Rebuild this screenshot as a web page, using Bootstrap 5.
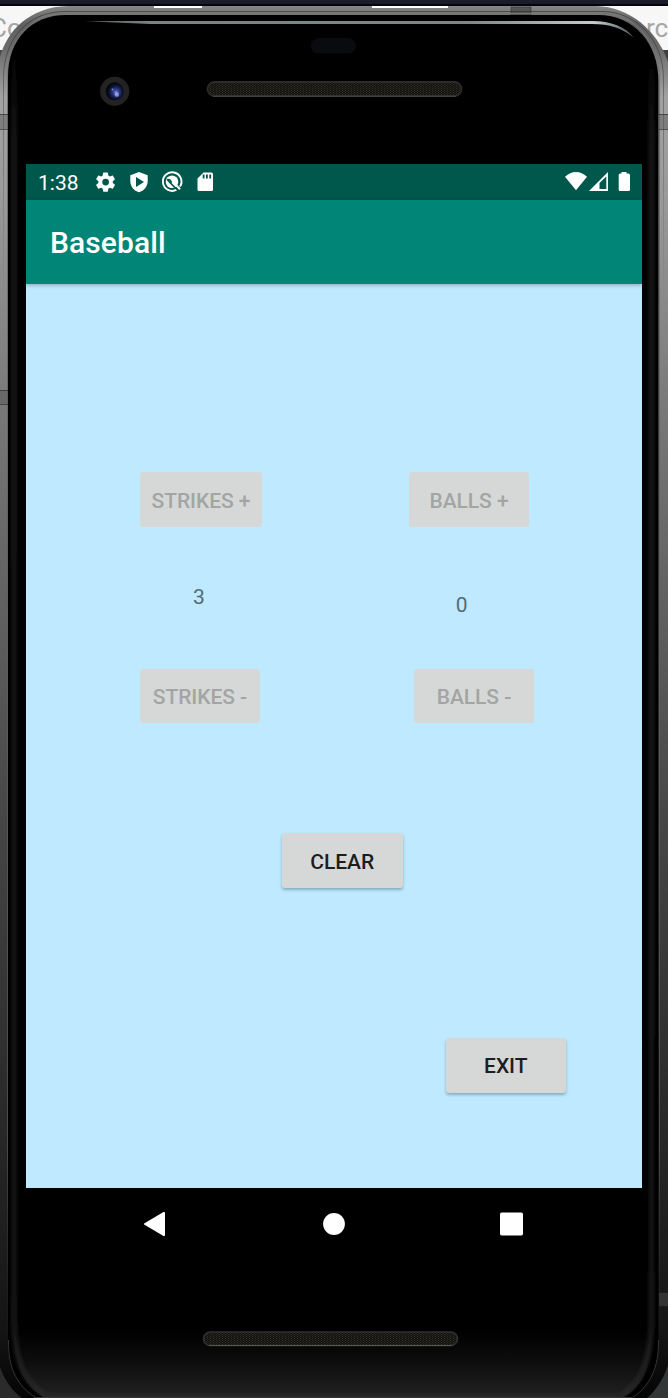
<!DOCTYPE html>
<html lang="en">
<head>
<meta charset="utf-8">
<meta name="viewport" content="width=device-width, initial-scale=1">
<title>Baseball</title>
<link href="https://cdn.jsdelivr.net/npm/bootstrap@5.3.0/dist/css/bootstrap.min.css" rel="stylesheet">
<style>
  body { font-family: Roboto, sans-serif; background: #f7f7f7; overflow: hidden; }
  .device { width: 668px; height: 1398px; }
  .shell { inset: 0; }
  .shell text { font-family: Roboto, sans-serif; }
  .forehead { height: 164px; }
  .display { width: 616px; margin-left: 26px; }
  .statusbar { height: 36px; background: #00574b; color: #fff; font-size: 21px; padding: 0 10px 0 12px; }
  .statusbar .clock { width: 40px; line-height: 36px; padding-top: 1px; }
  .appbar { height: 84px; background: #008577; box-shadow: 0 1px 4px rgba(0,0,0,.3); padding: 2px 0 0 24px; z-index: 1; }
  .appbar h1 { font-size: 30px; font-weight: 500; line-height: 36px; letter-spacing: .1px; }
  .board { height: 904px; background: #bfe9ff; padding-top: 188px; }
  .key { --bs-btn-font-size: 21px; --bs-btn-font-weight: 500; --bs-btn-line-height: 24px;
    --bs-btn-padding-x: 0; --bs-btn-padding-y: 0; --bs-btn-border-width: 0; --bs-btn-border-radius: 3px;
    --bs-btn-color: #1c1e1e; --bs-btn-bg: #d6d8d7;
    --bs-btn-disabled-color: #a3a5a4; --bs-btn-disabled-bg: #d6d8d7; --bs-btn-disabled-opacity: 1;
    width: 120px; height: 55px; padding-top: 2px; letter-spacing: -.05px; }
  .key-wide { width: 122px; }
  .key-short { height: 54px; padding-top: 1px; }
  .key-raised { width: 120.5px; padding-top: 1px; box-shadow: 0 2px 3px rgba(0,40,60,.3); }
  .key-clear { padding-top: 3px; }
  .pair { padding-left: 114px; }
  .count { font-size: 21px; line-height: 24px; color: #546b77; }
  .counts { height: 142px; padding-left: 167px; }
</style>
</head>
<body>
<div class="device position-relative overflow-hidden">
  <!-- phone body -->
  <svg class="shell position-absolute" width="668" height="1398" viewBox="0 0 668 1398" aria-hidden="true">
    <defs>
      <linearGradient id="rim" x1="0" y1="0" x2="0" y2="1398" gradientUnits="userSpaceOnUse">
        <stop offset="0" stop-color="#929292"/><stop offset=".018" stop-color="#606060"/><stop offset=".035" stop-color="#6c6c6c"/><stop offset=".07" stop-color="#a2a2a2"/><stop offset=".14" stop-color="#9a9a9a"/><stop offset=".3" stop-color="#777"/>
        <stop offset=".6" stop-color="#444"/><stop offset=".85" stop-color="#222"/><stop offset=".95" stop-color="#151515"/><stop offset="1" stop-color="#050505"/>
      </linearGradient>
      <linearGradient id="seam" x1="0" y1="0" x2="0" y2="1350" gradientUnits="userSpaceOnUse">
        <stop offset="0" stop-color="#777"/><stop offset=".85" stop-color="#4a4a4a"/><stop offset="1" stop-color="#222" stop-opacity="0"/>
      </linearGradient>
      <linearGradient id="groove" x1="0" y1="0" x2="0" y2="300" gradientUnits="userSpaceOnUse">
        <stop offset="0" stop-color="#282828" stop-opacity=".6"/><stop offset=".15" stop-color="#282828" stop-opacity=".5"/><stop offset="1" stop-color="#282828" stop-opacity="0"/>
      </linearGradient>
      <linearGradient id="chin" x1="0" y1="1330" x2="0" y2="1398" gradientUnits="userSpaceOnUse">
        <stop offset="0" stop-color="#000"/><stop offset=".4" stop-color="#0b0b0b"/><stop offset=".9" stop-color="#1e1e1e"/><stop offset="1" stop-color="#2b2a2a"/>
      </linearGradient>
      <linearGradient id="edge" x1="0" y1="40" x2="0" y2="1398" gradientUnits="userSpaceOnUse">
        <stop offset="0" stop-color="#222" stop-opacity="0"/><stop offset=".08" stop-color="#222"/><stop offset=".9" stop-color="#1c1c1c"/><stop offset="1" stop-color="#2a2a2a"/>
      </linearGradient>
      <linearGradient id="glint" x1="85" x2="634" y1="0" y2="0" gradientUnits="userSpaceOnUse">
        <stop offset="0" stop-color="#505a5a"/><stop offset=".12" stop-color="#788484"/><stop offset=".7" stop-color="#7b8889"/><stop offset=".93" stop-color="#c1cccd"/><stop offset="1" stop-color="#505858"/>
      </linearGradient>
      <radialGradient id="lens" cx=".57" cy=".55" r=".5">
        <stop offset="0" stop-color="#7c8be0"/><stop offset=".28" stop-color="#34428f"/><stop offset=".7" stop-color="#10163a"/><stop offset="1" stop-color="#05050c"/>
      </radialGradient>
      <pattern id="mesh" width="3" height="2" patternUnits="userSpaceOnUse">
        <rect width="3" height="2" fill="#13120f"/><rect width="1" height="1" fill="#35322c"/><rect x="1.500" y="1" width="1" height="1" fill="#2b2925"/>
      </pattern>
      <filter id="soft" x="-1" width="3"><feGaussianBlur stdDeviation="2"/></filter>
    </defs>
    <rect width="668" height="1398" fill="#f7f7f7"/>
    <rect width="668" height="5" fill="#181d29"/><rect y="4" width="668" height="2" fill="#04050a"/>
    <text x="-10" y="37" font-size="26" fill="#a6a6a6">Co</text>
    <text x="646" y="37" font-size="26" fill="#a6a6a6">rc</text>
    <rect y="50" width="8" height="14" fill="#464b4b"/><rect x="660" y="50" width="8" height="14" fill="#3c4240"/>
    <rect y="1350" width="30" height="48" fill="#2b2b2b"/><rect x="638" y="1350" width="30" height="48" fill="#333637"/>
    <path d="M-2 68C1 38 24 7 68 6H596C632 7 660 33 670 68V1358C666 1374 659 1388 646 1399H23C9 1388 2 1376 -2 1360Z" fill="url(#rim)"/>
    <path d="M154 6H202V8H154ZM372 6H448V8H372Z" fill="#fff"/>
    <rect x="511" y="7" width="20" height="9" fill="#555" stroke="#333" stroke-width=".6"/>
    <path d="M3.500 300V78C3.500 42 25 11.500 65 11.500H602C638 11.500 663.500 42 663.500 78V300" fill="none" stroke="url(#groove)"/>
    <path d="M7.500 1350V78C7.500 42 29 13.500 65 13.500H602C634 13.500 659.500 42 659.500 78V1350" fill="none" stroke="url(#seam)"/>
    <g fill="#555" fill-opacity=".45">
      <path d="M0 114H8V129H0ZM659 114H668V129H659ZM0 390H8V404H0ZM659 1293H668V1306H659Z"/>
    </g>
    <path d="M0 114.500H8M0 129.500H8M659 114.500H668M659 129.500H668M0 390.500H8M0 404.500H8M659 1292.500H668M659 1306.500H668" stroke="#222" stroke-opacity=".6"/>
    <path d="M8 76C8 39 32 15 66 15H598C634 15 658.500 43 658.500 82V1345C658.500 1371 645 1393 626 1399H42C20 1391 8 1368 8 1345Z" fill="#000"/>
    <path d="M14 1330H652C652 1362 645 1386 622 1398H45C22 1386 14 1362 14 1330Z" fill="url(#chin)"/>
    <path d="M14 60V1315C14 1362 24 1382 46 1395M651.500 60V1315C651.500 1362 641 1383 622 1395" fill="none" stroke="url(#edge)" stroke-width="4" filter="url(#soft)"/>
    <path d="M8.500 1340C8 1368 17 1386 36 1398M658.500 1340C659 1368 650 1386 632 1398" fill="none" stroke="#303536"/>
    <path d="M34 1397.500H632" stroke="#353333"/>
    <path d="M85 21.300L115 21H592C611 21 626 27 633.500 37.500C622 28 610 24 592 24H150Z" fill="url(#glint)"/>
    <!-- sensor, camera and speakers -->
    <rect x="311" y="38" width="45" height="15.500" rx="7.750" fill="#0a0b0f"/>
    <circle cx="114.700" cy="91.300" r="14.600" fill="#242323"/>
    <circle cx="114.700" cy="91.300" r="9" fill="url(#lens)"/>
    <circle cx="112.500" cy="89.500" r="1" fill="#7189d7"/><circle cx="116.800" cy="94.500" r="2.200" fill="#a6b4ff" fill-opacity=".75"/>
    <rect x="207.500" y="82" width="254" height="14" rx="7" fill="url(#mesh)" stroke="#2c2b2a" stroke-width="1.800"/>
    <path d="M213 96.300H456" stroke="#4a4846"/>
    <rect x="203.500" y="1332" width="254" height="13.500" rx="6.750" fill="url(#mesh)" stroke="#30302f" stroke-width="1.600"/>
    <path d="M209 1345.500H452" stroke="#585654"/>
  </svg>

  <div class="position-relative d-flex flex-column">
    <div class="forehead"></div>
    <div class="display">
      <header class="statusbar d-flex align-items-center">
        <span class="clock">1:38</span>
        <svg width="126" height="36" viewBox="78 164 126 36" overflow="visible" fill="#fff" aria-hidden="true">
          <g transform="translate(94.100 170.600) scale(.96)"><path fill-rule="evenodd" d="M19.400 13c.1-.7.1-1.300 0-2l2.100-1.600c.2-.2.300-.4.100-.7l-2-3.400c-.1-.2-.4-.3-.6-.2l-2.500 1c-.5-.4-1.100-.7-1.700-1l-.4-2.600c0-.3-.2-.5-.5-.5h-4c-.3 0-.5.2-.5.500L9 5.100c-.6.3-1.200.6-1.700 1l-2.500-1c-.2-.1-.5 0-.6.2l-2 3.400c-.1.300 0 .5.200.7L4.500 11c-.1.700-.1 1.300 0 2l-2.100 1.600c-.2.200-.3.400-.2.700l2 3.400c.1.200.4.300.6.200l2.500-1c.5.400 1.100.7 1.700 1l.4 2.600c0 .3.200.5.500.5h4c.3 0 .5-.2.500-.5l.4-2.600c.6-.3 1.200-.6 1.700-1l2.500 1c.2.100.5 0 .6-.2l2-3.400c.1-.3.100-.5-.1-.7zM12 15.500a3.500 3.500 0 1 1 0-7 3.500 3.500 0 0 1 0 7z"/></g>
          <path fill-rule="evenodd" d="M139 172L147.700 175.300V181C147.700 186.500 144 190.800 139 192.300C134 190.800 130.300 186.500 130.300 181V175.300ZM136 177V187L144 182Z"/>
          <path d="M176.700 189.700A9.300 9.300 0 1 1 180 186.600" fill="none" stroke="#fff" stroke-width="1.900"/>
          <circle cx="172" cy="181.800" r="6.300"/>
          <path d="M167 179.800C169.500 179 172 181 171 183.500L177.500 190M167.500 180L174 186.800" fill="none" stroke="#00574b" stroke-width="1.500"/>
          <path d="M174.500 183.500L180 189.300" stroke="#fff" stroke-width="2"/>
          <path fill-rule="evenodd" d="M203.500 172.500H211.500Q213 172.500 213 174V189.500Q213 191 211.500 191H199Q197.500 191 197.500 189.500V178.500ZM202.700 174.500V178.500H204.500V174.500ZM206 174.500V178.500H207.800V174.500ZM209.300 174.500V178.500H211.100V174.500Z"/>
        </svg>
        <svg class="ms-auto" width="68" height="36" viewBox="564 164 68 36" fill="#fff" aria-hidden="true">
          <path d="M565 176.700Q570 172 576 172T587 176.700L576 190.300Z"/>
          <path fill-rule="evenodd" d="M589 191L608 172V191ZM599.500 183V189H606.300V176.500Z"/>
          <path d="M621.500 173.500V172H626.500V173.500H628.500Q630 173.500 630 175V189.500Q630 191 628.500 191H620Q618.700 191 618.700 189.500V175Q618.700 173.500 620 173.500Z"/>
        </svg>
      </header>
      <nav class="appbar d-flex align-items-center position-relative">
        <h1 class="text-white mb-0">Baseball</h1>
      </nav>
      <main class="board">
        <div class="pair d-flex">
          <button class="btn key key-wide" disabled>STRIKES +</button>
          <button class="btn key" style="margin-left:147px" disabled>BALLS +</button>
        </div>
        <div class="counts d-flex align-items-start">
          <span class="count" style="margin-top:58px">3</span>
          <span class="count" style="margin-top:66px;margin-left:251px">0</span>
        </div>
        <div class="pair d-flex">
          <button class="btn key key-short" disabled>STRIKES -</button>
          <button class="btn key key-short" style="margin-left:154px" disabled>BALLS -</button>
        </div>
        <div class="d-flex" style="margin:110.400px 0 0 256px">
          <button class="btn key key-raised key-clear">CLEAR</button>
        </div>
        <div class="d-flex justify-content-end" style="margin:149.600px 76px 0 0">
          <button class="btn key key-raised">EXIT</button>
        </div>
      </main>
      <footer>
        <svg class="d-block" width="616" height="72" viewBox="26 1188 616 72" fill="#fff" aria-label="Navigation">
          <path d="M144.500 1223.200L163.500 1212Q165 1211.500 165 1213V1235Q165 1236.500 163.500 1236L144.500 1224.800Q143.200 1224 144.500 1223.200Z"/>
          <circle cx="334" cy="1224" r="10.900"/>
          <rect x="500" y="1212.500" width="23" height="23" rx="1.800"/>
        </svg>
      </footer>
    </div>
  </div>
</div>
<script src="https://cdn.jsdelivr.net/npm/bootstrap@5.3.0/dist/js/bootstrap.bundle.min.js"></script>
</body>
</html>
